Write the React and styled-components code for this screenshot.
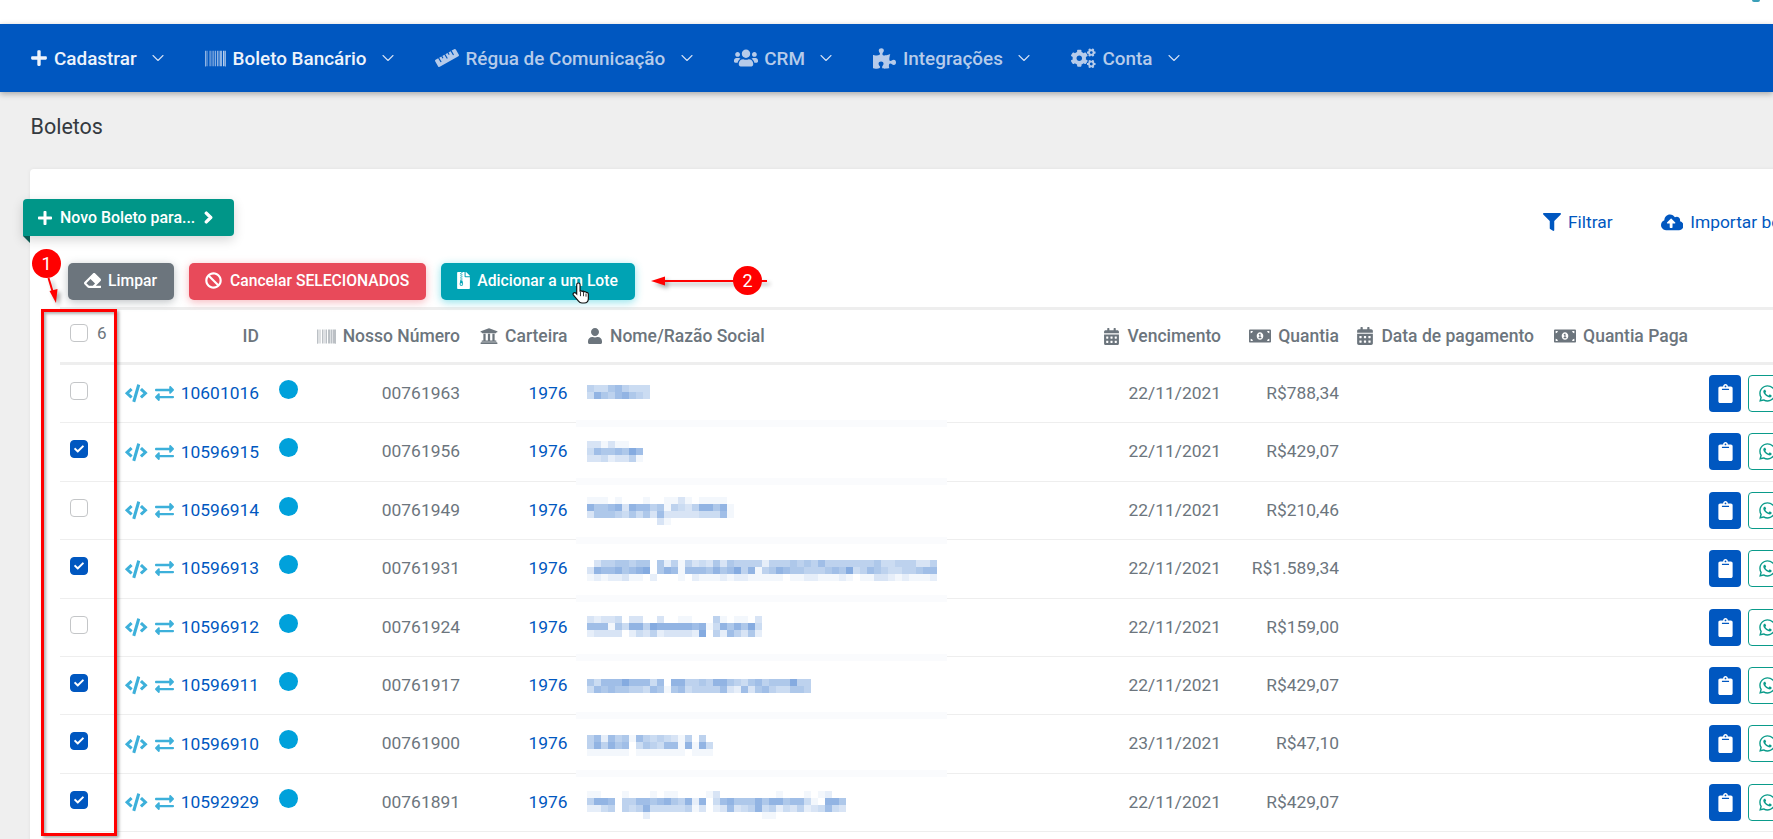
import React from 'react';
import styled, { createGlobalStyle } from 'styled-components';
import {
    FaPlus, FaBarcode, FaRuler, FaUsers, FaPuzzlePiece, FaCogs, FaFilter, FaCloudUploadAlt,
    FaEraser, FaBan, FaFileArchive, FaCode, FaExchangeAlt, FaUniversity, FaUser, FaCalendarAlt,
    FaMoneyBillAlt, FaClipboard, FaWhatsapp, FaChevronRight, FaCheck,
} from 'react-icons/fa';
import { ChevronDown } from 'lucide-react';

const BLUE = '#0057c0';
const GREY = '#6c757d';
const COLUMNS = '52px 147px 46px 155px 107.5px 522.5px 131px 118px 195px 154px 1fr';

const SHADES = ['#ffffff', '#f3f7fc', '#e6eef9', '#d8e4f5', '#cbdcf2', '#bdd2ee', '#aec8ea', '#a0bee7', '#92b4e3', '#85abe0'];

const menu = [
    { label: 'Cadastrar', icon: FaPlus, size: 18, active: true },
    { label: 'Boleto Bancário', icon: FaBarcode, size: 21, active: true, dimIcon: true },
    { label: 'Régua de Comunicação', icon: FaRuler, size: 24 },
    { label: 'CRM', icon: FaUsers, size: 24 },
    { label: 'Integrações', icon: FaPuzzlePiece, size: 23 },
    { label: 'Conta', icon: FaCogs, size: 24.6 },
];

const rows = [
    {
        id: '10601016', number: '00761963', due: '22/11/2021', amount: 'R$788,34', checked: false, top: 20,
        blur: ['544675444', '486578654'],
    },
    {
        id: '10596915', number: '00761956', due: '22/11/2021', amount: 'R$429,07', checked: true, top: 17.6,
        blur: ['33131100', '47667697', '33423351'],
    },
    {
        id: '10596914', number: '00761949', due: '22/11/2021', amount: 'R$210,46', checked: false, top: 15.2,
        blur: ['111010001001131011110', '866783877561543588681', '366654646373333344471', '000000000031000000000'],
    },
    {
        id: '10596913', number: '00761931', due: '22/11/2021', amount: 'R$1.589,34', checked: true, top: 19.8,
        blur: [
            '03556656606251534363655552555656575555555644555335',
            '38778678906871777686795815687665556769457654455677',
            '12122311020001021112122111110112211121011332121112',
        ],
    },
    {
        id: '10596912', number: '00761924', due: '22/11/2021', amount: 'R$159,00', checked: false, top: 17.4,
        blur: ['3233403300300110005101103', '7771648859888887814868694', '2333302435233332905275362'],
    },
    {
        id: '10596911', number: '00761917', due: '22/11/2021', amount: 'R$429,07', checked: true, top: 22,
        blur: ['64777977747088556588654675666955', '47676655476167455557327367544665'],
    },
    {
        id: '10596910', number: '00761900', due: '23/11/2021', amount: 'R$47,10', checked: true, top: 19.6,
        blur: ['572756175454315050', '585867046547718184', '111111011111110111'],
    },
    {
        id: '10592929', number: '00761891', due: '22/11/2021', amount: 'R$429,07', checked: true, top: 17.2,
        blur: [
            '1100010001011000013000000001000101200',
            '5887055776786582804786668688677410886',
            '2245054584444451302373458452435234743',
            '0000000020000000000000000110000000000',
        ],
    },
];

const GlobalStyle = createGlobalStyle`
    html, body {
        margin: 0;
        height: 100%;
        background: #efefef;
        overflow: hidden;
    }
    body {
        font-family: Roboto, "Liberation Sans", sans-serif;
        font-size: 17.4px;
        color: ${GREY};
    }
`;

const Page = styled.div`
    position: relative;
    width: 1773px;
    height: 839px;
    overflow: hidden;
`;

const TopBar = styled.div`
    height: 24px;
    background: #fff;
    display: flex;
    justify-content: flex-end;
    padding-right: 13px;
    span {
        width: 8px;
        height: 2px;
        background: #3a9fb8;
        border-radius: 0 0 4px 4px;
    }
`;

const Nav = styled.nav`
    position: relative;
    z-index: 2;
    height: 68px;
    background: ${BLUE};
    box-shadow: 0 2px 6px rgba(0, 0, 0, 0.3);
    display: flex;
    align-items: center;
    gap: 37.2px;
    padding-left: 29.5px;
`;

const NavItem = styled.a`
    display: flex;
    align-items: center;
    font-size: 18.9px;
    font-weight: 500;
    color: ${(p) => (p.$active ? '#eef3fb' : '#b6cbea')};
    > svg:first-child {
        margin-right: 6.5px;
        color: ${(p) => (p.$iconDim ? '#c3d5ef' : 'inherit')};
    }
    > svg:last-child {
        margin-left: 11.3px;
        color: #d3e0f3;
    }
`;

const Title = styled.h1`
    margin: 0;
    padding: 23px 0 30px 30.5px;
    font-size: 21.5px;
    line-height: 24px;
    font-weight: 400;
    color: #343a40;
`;

const Card = styled.section`
    position: relative;
    margin-left: 30px;
    width: 1800px;
    padding: 42px 0 20px;
    background: #fff;
    border-radius: 4px 0 0 0;
    box-shadow: 0 0 4px rgba(0, 0, 0, 0.06);
`;

const Ribbon = styled.button`
    position: absolute;
    left: -7px;
    top: 30px;
    height: 37px;
    width: 211px;
    padding: 0 0 0 14px;
    border: 0;
    border-radius: 4px 4px 4px 0;
    background: #009688;
    color: #fff;
    font: 500 15.9px Roboto, sans-serif;
    display: flex;
    align-items: center;
    box-shadow: 0 4px 12px rgba(0, 0, 0, 0.16);
    span {
        margin: 0 7px 0 7px;
    }
    &::after {
        content: '';
        position: absolute;
        left: 0;
        top: 100%;
        border-top: 7px solid #0b5a52;
        border-left: 7px solid transparent;
    }
`;

const Links = styled.div`
    display: flex;
    align-items: center;
    height: 22px;
    padding-left: 1513px;
    margin-bottom: 30px;
    gap: 48px;
`;

const LinkItem = styled.a`
    display: flex;
    align-items: center;
    gap: 7px;
    color: ${BLUE};
    white-space: nowrap;
`;

const Actions = styled.div`
    display: flex;
    gap: 15px;
    padding-left: 38px;
    margin-bottom: 7px;
`;

const ActionButton = styled.button`
    height: 37px;
    padding: 0 17px 2px ${(p) => p.$left}px;
    border: 0;
    border-radius: 5px;
    color: #fff;
    background: ${(p) => p.$color};
    box-shadow: 0 2px 8px ${(p) => p.$glow};
    font: 500 15.7px/35px Roboto, sans-serif;
    display: flex;
    align-items: center;
    gap: ${(p) => p.$gap}px;
    white-space: nowrap;
`;

const Table = styled.div`
    margin-left: 30px;
    border-top: 3px solid #eee;
`;

const HeadRow = styled.div`
    display: grid;
    grid-template-columns: ${COLUMNS};
    height: 52px;
    border-bottom: 3px solid #eee;
    font-size: 17.5px;
    font-weight: 500;
    line-height: 52px;
`;

const HeadCell = styled.div`
    display: flex;
    align-items: center;
    gap: 7px;
    justify-content: ${(p) => (p.$left ? 'flex-start' : 'flex-end')};
    padding-left: ${(p) => (p.$left ? '19.5px' : 0)};
    white-space: nowrap;
    min-width: 0;
`;

const SelectAll = styled.div`
    display: flex;
    align-items: center;
    gap: 9px;
    padding: 14px 0 0 10px;
    height: 18px;
    line-height: 18px;
    font-size: 17px;
    font-weight: 400;
`;

const Row = styled.div`
    display: grid;
    grid-template-columns: ${COLUMNS};
    height: 58.4px;
    box-sizing: border-box;
    border-bottom: 1.5px solid #eee;
    line-height: 57px;
`;

const CheckCell = styled.div`
    padding: 17px 0 0 10px;
`;

const Check = styled.span`
    display: flex;
    align-items: center;
    justify-content: center;
    width: 18px;
    height: 18px;
    box-sizing: border-box;
    border-radius: 4px;
    color: #fff;
    background: ${(p) => (p.$on ? BLUE : '#fff')};
    border: 1px solid ${(p) => (p.$on ? BLUE : '#c4c6c8')};
`;

const IdCell = styled.div`
    display: flex;
    align-items: center;
    justify-content: flex-end;
    gap: 7px;
    color: #3db0da;
`;

const IdLink = styled.a`
    color: ${BLUE};
`;

const DotCell = styled.div`
    padding: 15px 0 0 20px;
`;

const Dot = styled.span`
    display: block;
    width: 19px;
    height: 19px;
    border-radius: 50%;
    background: #00a1db;
`;

const Num = styled.div`
    text-align: right;
    color: ${(p) => (p.$link ? BLUE : GREY)};
`;

const NameCell = styled.div`
    position: relative;
    padding: ${(p) => p.$top}px 0 0 19.5px;
    line-height: 0;
    &::before {
        content: '';
        display: ${(p) => (p.$first ? 'none' : 'block')};
        position: absolute;
        left: 8.5px;
        top: -3.4px;
        width: 371px;
        height: 7px;
        background: #fafbfd;
    }
`;

const ButtonsCell = styled.div`
    display: flex;
    gap: 7px;
    padding: 10px 0 0 21px;
`;

const Clip = styled.button`
    width: 32px;
    height: 37px;
    padding: 0;
    border: 0;
    border-radius: 4px;
    background: ${BLUE};
    color: #fff;
    display: flex;
    align-items: center;
    justify-content: center;
`;

const Zap = styled.button`
    width: 36px;
    height: 37px;
    padding: 0 0 0 2px;
    box-sizing: border-box;
    border: 1.5px solid #0a9b8a;
    border-radius: 4px;
    background: #fff;
    color: #0a9b8a;
    display: flex;
    align-items: center;
    justify-content: center;
`;

const RedBox = styled.div`
    position: absolute;
    left: 40.5px;
    top: 309px;
    width: 76.5px;
    height: 527px;
    box-sizing: border-box;
    border: 3px solid #f00;
    box-shadow: 2px 2px 3px rgba(0, 0, 0, 0.35), inset 2px 2px 3px rgba(0, 0, 0, 0.3);
`;

const Badge = styled.div`
    position: absolute;
    left: ${(p) => p.$x}px;
    top: ${(p) => p.$y}px;
    width: 29px;
    height: 29px;
    border-radius: 50%;
    background: #f00;
    color: #fff;
    font-size: 18px;
    line-height: 29px;
    text-align: center;
`;

const Overlay = styled.svg`
    position: absolute;
    left: 0;
    top: 0;
    pointer-events: none;
    filter: drop-shadow(3px 3px 2px rgba(0, 0, 0, 0.35));
`;

const Cursor = styled.svg`
    position: absolute;
    left: 572px;
    top: 282px;
`;

const Blur = ({ lines }) => (
    <svg width={lines[0].length * 7} height={lines.length * 7} shapeRendering="crispEdges">
        {lines.map((line, y) =>
            line.split('').map((shade, x) => (
                <rect key={`${x}-${y}`} x={x * 7} y={y * 7} width="7" height="7" fill={SHADES[shade]} />
            ))
        )}
    </svg>
);

const App = () => (
    <Page>
        <GlobalStyle />
        <TopBar><span /></TopBar>
        <Nav>
            {menu.map((item) => (
                <NavItem key={item.label} $active={item.active} $iconDim={item.dimIcon}>
                    <item.icon size={item.size} />
                    {item.label}
                    <ChevronDown size={20} strokeWidth={1.3} />
                </NavItem>
            ))}
        </Nav>
        <Title>Boletos</Title>
        <Card>
            <Ribbon>
                <FaPlus size={16} />
                <span>Novo Boleto para...</span>
                <FaChevronRight size={13} stroke="currentColor" strokeWidth={50} />
            </Ribbon>
            <Links>
                <LinkItem><FaFilter size={18} /> Filtrar</LinkItem>
                <LinkItem><FaCloudUploadAlt size={22.5} /> Importar boletos</LinkItem>
            </Links>
            <Actions>
                <ActionButton $color={GREY} $glow="rgba(108,117,125,.45)" $left={16} $gap={7}>
                    <FaEraser size={17} /> Limpar
                </ActionButton>
                <ActionButton $color="#e84a5a" $glow="rgba(232,74,90,.4)" $left={16} $gap={8}>
                    <FaBan size={17} /> Cancelar SELECIONADOS
                </ActionButton>
                <ActionButton $color="#00a3b4" $glow="rgba(0,190,210,.45)" $left={14} $gap={5}>
                    <FaFileArchive size={17} /> Adicionar a um Lote
                </ActionButton>
            </Actions>
            <Table>
                <HeadRow>
                    <SelectAll><Check />6</SelectAll>
                    <HeadCell>ID</HeadCell>
                    <div />
                    <HeadCell><FaBarcode size={19} color="#9aa1a8" /> Nosso Número</HeadCell>
                    <HeadCell><FaUniversity size={18} /> Carteira</HeadCell>
                    <HeadCell $left><FaUser size={16} /> Nome/Razão Social</HeadCell>
                    <HeadCell><FaCalendarAlt size={17} /> Vencimento</HeadCell>
                    <HeadCell><FaMoneyBillAlt size={22} /> Quantia</HeadCell>
                    <HeadCell><FaCalendarAlt size={18} /> Data de pagamento</HeadCell>
                    <HeadCell><FaMoneyBillAlt size={22} /> Quantia Paga</HeadCell>
                    <div />
                </HeadRow>
                {rows.map((row, index) => (
                    <Row key={row.id}>
                        <CheckCell>
                            <Check $on={row.checked}>{row.checked && <FaCheck size={10} />}</Check>
                        </CheckCell>
                        <IdCell>
                            <FaCode size={22.5} />
                            <FaExchangeAlt size={19} />
                            <IdLink>{row.id}</IdLink>
                        </IdCell>
                        <DotCell><Dot /></DotCell>
                        <Num>{row.number}</Num>
                        <Num $link>1976</Num>
                        <NameCell $top={row.top} $first={index === 0}><Blur lines={row.blur} /></NameCell>
                        <Num>{row.due}</Num>
                        <Num>{row.amount}</Num>
                        <div />
                        <div />
                        <ButtonsCell>
                            <Clip><FaClipboard size={19} /></Clip>
                            <Zap><FaWhatsapp size={19} /></Zap>
                        </ButtonsCell>
                    </Row>
                ))}
            </Table>
        </Card>

        <RedBox />
        <Overlay width="800" height="320">
            <path d="M48.5 278 L54 296" stroke="#f00" strokeWidth="2" />
            <path d="M56 303 L49.5 291 L57.5 289 Z" fill="#f00" />
            <path d="M664 281 H767" stroke="#f00" strokeWidth="2" />
            <path d="M651 281 L665 276.5 V285.5 Z" fill="#f00" />
        </Overlay>
        <Badge $x={32} $y={249}>1</Badge>
        <Badge $x={733} $y={266}>2</Badge>
        <Cursor width="18" height="22" viewBox="0 0 17 21">
            <path
                d="M6 1c.9 0 1.6.7 1.6 1.6V8.6l.3-.1c.7-.2 1.4 0 1.8.5.6-.4 1.5-.2 1.9.4.7-.4 1.6-.1 2 .6.9-.2 1.9.4 1.9 1.5V16c0 2.4-1.6 4-4 4H9.4c-1.4 0-2.5-.6-3.3-1.7L1.3 12.6c-.5-.7-.4-1.6.2-2.1.7-.5 1.5-.4 2.1.2l.8.8V2.6C4.4 1.7 5.1 1 6 1z"
                fill="#fff"
                stroke="#111"
                strokeWidth="1.1"
            />
            <path d="M8 9v4.5M10.9 9.6v4M13.3 11v3" stroke="#111" strokeWidth="0.8" fill="none" />
        </Cursor>
    </Page>
);

export default App;
